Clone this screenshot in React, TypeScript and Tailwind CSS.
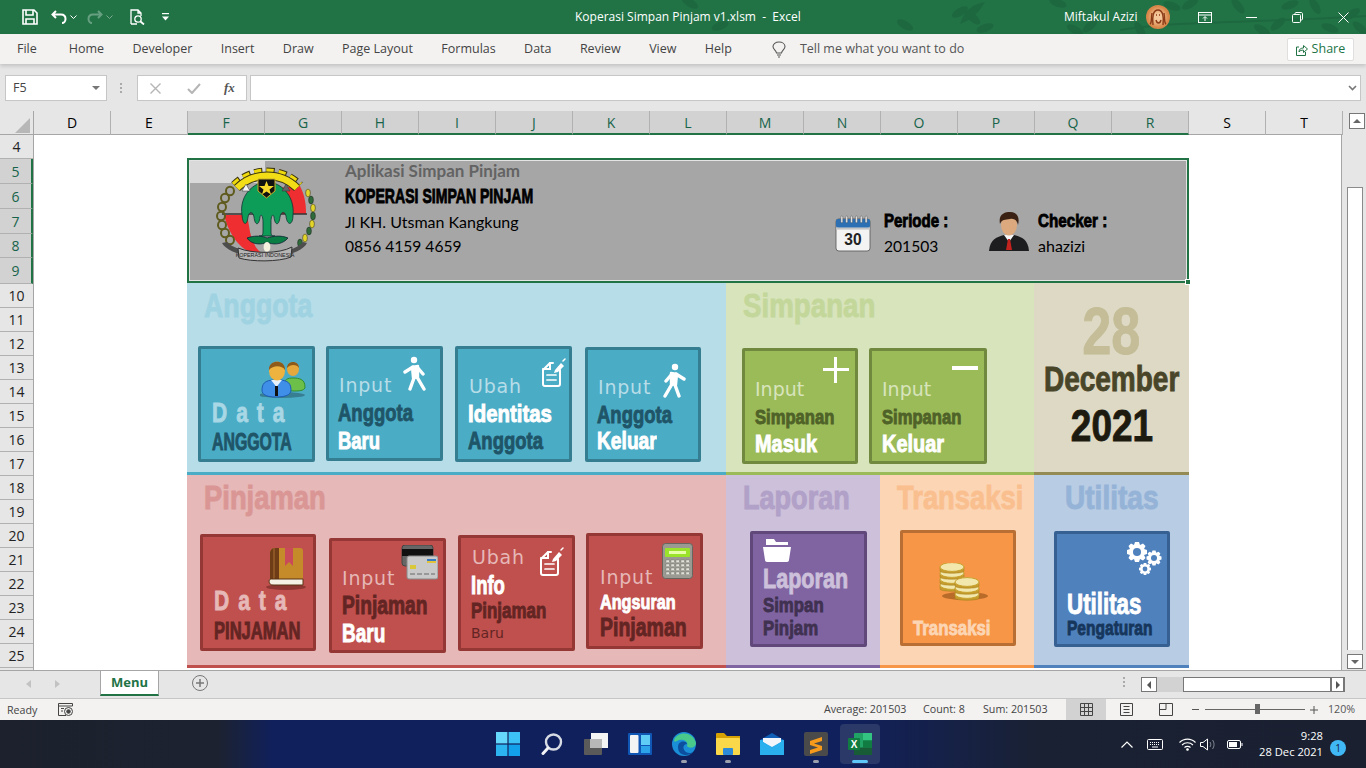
import React from 'react';
import clsx from 'clsx';

// Impact is not installed: bold Arial metrics squeezed per line to the reference widths
const impact = "[font-family:'Liberation_Sans',sans-serif] font-bold [-webkit-text-stroke:0.9px] whitespace-nowrap";
const heavy = impact + ' origin-left';
const thin = "[font-family:'DejaVu_Sans',sans-serif] whitespace-nowrap";
const calibri = "[font-family:'Lato',sans-serif] whitespace-nowrap";

const COLUMNS = ['D', 'E', 'F', 'G', 'H', 'I', 'J', 'K', 'L', 'M', 'N', 'O', 'P', 'Q', 'R', 'S', 'T'];
const SELECTED_COLS = 'FGHIJKLMNOPQR';
const ROWS: [string, number][] = [
  ['4', 24], ['5', 25], ['6', 25], ['7', 25], ['8', 24], ['9', 26], ['10', 24], ['11', 24], ['12', 24], ['13', 24], ['14', 24],
  ['15', 24], ['16', 24], ['17', 24], ['18', 24], ['19', 24], ['20', 24], ['21', 24], ['22', 24], ['23', 24], ['24', 24], ['25', 24],
];
const TABS = ['Home', 'Developer', 'Insert', 'Draw', 'Page Layout', 'Formulas', 'Data', 'Review', 'View', 'Help'];

const Logo = () => (
  <svg width="120" height="110" viewBox="0 0 120 110" className="shrink-0">
    <path d="M72 28 L95 26 C100 36 101 44 101 54 L72 54 Z" fill="#ee2e30" />
    <path d="M19 55 H42 L44 66 C46 80 50 90 60 95 C42 96 26 82 19 55 Z" fill="#ee2e30" />
    <path d="M17 54 H102" stroke="#333" strokeWidth="1.6" />
    <path d="M29 25 A47 47 0 0 1 95 25" fill="none" stroke="#3a3410" strokeWidth="8" strokeDasharray="8 4" />
    <path d="M29 25 A47 47 0 0 1 95 25" fill="none" stroke="#eed90c" strokeWidth="6" strokeDasharray="7 5" />
    <path d="M32 28 A43 43 0 0 1 92 28" fill="none" stroke="#3a3410" strokeWidth="8.5" />
    <path d="M32 28 A43 43 0 0 1 92 28" fill="none" stroke="#f2dd16" strokeWidth="6.5" />
    {[[25, 31], [20, 38], [17, 47], [16, 56], [17, 65], [20, 73], [25, 80]].map(([x, y]) => (
      <ellipse key={y} cx={x} cy={y} rx="4" ry="4.2" fill="none" stroke="#5f5b1e" strokeWidth="2" />
    ))}
    {[[103, 33], [106, 40], [108, 48], [108, 56], [107, 64], [104, 71], [100, 78], [95, 83]].map(([x, y], i) => (
      <ellipse key={y} cx={x} cy={y} rx="2.4" ry="3.9" fill={i % 2 ? '#2f6b3a' : '#e4d52a'} stroke="#222" strokeWidth="0.5" />
    ))}
    <path d="M37 55 C34 36 48 22 62 22 C76 22 90 36 88 55 C88 66 82 66 81 56 C80 51 76 51 75 57 C74 66 70 66 69 57 C68 53 66 56 66 62 L66 73 C66 76 68 76 70 76 H54 C56 76 58 76 58 72 L58 62 C58 56 56 53 55 57 C54 66 50 66 49 57 C48 51 44 51 43 57 C42 66 38 66 37 55 Z" fill="#0e9d58" stroke="#133" strokeWidth="0.8" />
    <path d="M42 78 C50 75 58 76 62 78 C68 76 76 75 83 78 C78 84 70 85 64 83 L60 83 C54 85 46 84 42 78 Z" fill="#0a7d45" stroke="#123" strokeWidth="0.8" />
    <ellipse cx="62" cy="87" rx="3.4" ry="5" fill="#f4f2df" />
    <path d="M53 19 H70 V31 L61.5 38 L53 31 Z" fill="#111" stroke="#c7ad28" strokeWidth="1" />
    <path d="M61.5 21 L63.5 26 L69 26 L64.5 29.5 L66 34.5 L61.5 31.5 L57 34.5 L58.5 29.5 L54 26 L59.5 26 Z" fill="#f6d92a" />
    <path d="M41 24 L45 31 H37 Z" fill="#f5f5f5" stroke="#333" strokeWidth="0.5" />
    <path d="M81 24 L85 31 H77 Z" fill="#666" stroke="#333" strokeWidth="0.5" />
    <path d="M17 83 C28 102 92 102 102 83 L98 82 C88 96 34 96 22 82 Z" fill="#4d4d4d" />
    <path d="M33 88 C48 94 74 94 87 87 L86 97 C74 102 46 102 34 98 Z" fill="#b5b5b5" stroke="#333" strokeWidth="1" />
    <text x="60" y="97" textAnchor="middle" fontSize="5.4" fill="#222" fontFamily="'Liberation Sans',sans-serif">KOPERASI INDONESIA</text>
  </svg>
);

const Calendar = () => (
  <svg width="37" height="37" viewBox="0 0 38 38" className="shrink-0">
    <rect x="1" y="4" width="35" height="33" rx="3" fill="#f3f3f3" stroke="#666" />
    <rect x="1" y="4" width="35" height="9" rx="2" fill="#2d6fb3" />
    <rect x="1" y="13" width="35" height="2" fill="#c4c4c4" />
    {[6, 11, 16, 21, 26, 31].map((x) => (
      <rect key={x} x={x} y="1" width="2" height="7" rx="1" fill="#e8e8e8" stroke="#444" strokeWidth="0.4" />
    ))}
    <text x="18.5" y="31" textAnchor="middle" fontSize="16" fontWeight="700" fill="#222" fontFamily="'Liberation Sans',sans-serif">30</text>
  </svg>
);

const Businessman = () => (
  <svg width="40" height="40" viewBox="0 0 40 40" className="shrink-0">
    <path d="M0 39 C1 27 8 25 15 23 H25 C32 25 39 27 40 39 Z" fill="#1d1d1f" />
    <path d="M15 23 L20 30 L25 23 Z" fill="#f5f5f5" />
    <path d="M19 27 H21 L23 38 H17 Z" fill="#c2231f" />
    <ellipse cx="20" cy="13" rx="8" ry="10.5" fill="#dca97f" />
    <path d="M11 12 C9 2 16 0 21 0 C28 0 31 5 29 13 C28 8 25 6 21 7 C16 8 13 7 11 12 Z" fill="#3a2113" />
  </svg>
);

const People = ({ className }: { className: string }) => (
  <svg width="46" height="38" viewBox="0 0 46 38" className={className}>
    <ellipse cx="22" cy="35" rx="23" ry="3" fill="#2b5f70" opacity="0.6" />
    <path d="M23 26 C24 19 28 18 33 18 C39 18 45 19 45 27 C45 30 41 31 35 31 C29 31 24 30 23 26 Z" fill="#6cc04a" stroke="#2f8c2f" />
    <ellipse cx="33" cy="9" rx="6" ry="7" fill="#e5a83c" />
    <path d="M27 8 C27 0 39 0 39 8 C37 4 30 4 27 8 Z" fill="#8a5a1c" />
    <path d="M2 30 C2 21 8 20 17 20 C25 20 31 21 31 30 C31 35 25 37 16 37 C7 37 2 35 2 30 Z" fill="#3f8fe8" stroke="#1e5db5" />
    <path d="M11 20 L16.5 27 L22 20 Z" fill="#e7f1fb" />
    <rect x="15" y="26" width="3" height="10" fill="#111" />
    <ellipse cx="17" cy="11" rx="8" ry="9.5" fill="#eeb23f" />
    <path d="M9 10 C8 -1 26 -1 25 10 C22 5 13 5 9 10 Z" fill="#8f5b1b" />
  </svg>
);

const Walk = ({ className, flip }: { className: string; flip?: boolean }) => (
  <svg width="24" height="36" viewBox="0 0 24 36" className={className} fill="none" stroke="#fff" strokeLinecap="round" strokeLinejoin="round">
    <g transform={flip ? 'matrix(-1 0 0 1 24 0)' : undefined}>
      <circle cx="11" cy="4" r="3.2" fill="#fff" stroke="none" />
      <path d="M9 11 L15 10 L15 21 L10 22 Z" fill="#fff" strokeWidth="2.4" />
      <path d="M10 11 L2 16 M14 11 L20 18 M11 22 L7 33 M14 21 L21 33" strokeWidth="3.4" />
    </g>
  </svg>
);

const DocEdit = ({ className }: { className: string }) => (
  <svg width="26" height="29" viewBox="0 0 26 29" className={className} fill="none" stroke="#fff" strokeWidth="2" strokeLinecap="round">
    <path d="M10 5 L3 12 V26 C3 27 4 28 5 28 H18 C19 28 20 27 20 26 V12" />
    <path d="M10 5 V11 H3 M10 5 H13" />
    <path d="M15 12 L21 5 L24 8 L18 14 L14 15 Z" fill="#fff" stroke="none" />
    <path d="M23 3 L25 1" strokeWidth="1.5" />
    <path d="M7 17 H16 M7 22 H16" strokeWidth="1.7" />
  </svg>
);

const Book = ({ className }: { className: string }) => (
  <svg width="40" height="44" viewBox="0 0 40 44" className={className}>
    <ellipse cx="20" cy="41" rx="20" ry="3" fill="#6a2422" opacity="0.6" />
    <path d="M9 2 H34 C36 2 37 3 37 5 V35 H4 V7 C4 4 6 2 9 2 Z" fill="#c58a2a" />
    <path d="M4 7 C4 4 6 2 9 2 H13 V36 H4 Z" fill="#6e3c16" />
    <rect x="7" y="2" width="2" height="34" fill="#8c5524" />
    <path d="M19 2 H27 V20 L23 16 L19 20 Z" fill="#c94a58" />
    <path d="M3 35 C3 33 5 33 7 33 H37 V39 H7 C5 39 3 38 3 35 Z" fill="#f5f1e4" stroke="#5a3414" />
  </svg>
);

const Cards = ({ className }: { className: string }) => (
  <svg width="37" height="35" viewBox="0 0 37 35" className={className}>
    <rect x="1" y="0" width="31" height="21" rx="3" fill="#666" stroke="#444" />
    <rect x="1" y="4" width="31" height="7" fill="#111" />
    <rect x="6" y="11" width="31" height="23" rx="2" fill="#c9c9c9" stroke="#8a8a8a" />
    <rect x="26" y="14" width="9" height="2" fill="#3a7cc4" />
    <rect x="26" y="16" width="9" height="2" fill="#e2c23a" />
    <rect x="9" y="20" width="6" height="4" fill="#d9c93a" />
    <path d="M9 29 H34" stroke="#888" strokeWidth="1.4" strokeDasharray="5 2" />
  </svg>
);

const Calculator = ({ className }: { className: string }) => (
  <svg width="31" height="36" viewBox="0 0 31 36" className={className}>
    <rect x="0.5" y="0.5" width="30" height="35" rx="3" fill="#9a9a92" stroke="#66665f" />
    <rect x="3" y="5" width="25" height="9" rx="1" fill="#9be32a" />
    <rect x="7" y="8" width="17" height="3" fill="#e6ffa8" />
    {[17, 21, 25, 29].map((y) =>
      [4, 9, 14, 19, 24].map((x) => <rect key={`${x}-${y}`} x={x} y={y} width="3.4" height="2.8" fill="#e2e2da" stroke="#555" strokeWidth="0.3" />),
    )}
  </svg>
);

const Folder = ({ className }: { className: string }) => (
  <svg width="28" height="23" viewBox="0 0 28 23" className={className} fill="#fff">
    <path d="M3 0 H11 L13 3 H25 V6 H3 Z" />
    <path d="M0 8 H28 L26 21 C26 22 25 23 24 23 H4 C3 23 2 22 2 21 Z" />
  </svg>
);

const Coin = ({ x, y, n }: { x: number; y: number; n: number }) => (
  <g>
    {Array.from({ length: n }).map((_, i) => (
      <g key={i} transform={`translate(${x} ${y + (n - 1 - i) * 6})`}>
        <path d="M0 4 V8 C0 11 24 11 24 8 V4 Z" fill="#c49b2c" stroke="#a5801e" strokeWidth="0.5" />
        <ellipse cx="12" cy="4" rx="12" ry="4.4" fill="#f2e7ad" stroke="#c8a32f" />
      </g>
    ))}
  </g>
);

const Coins = ({ className }: { className: string }) => (
  <svg width="50" height="38" viewBox="0 0 50 38" className={className}>
    <ellipse cx="27" cy="33" rx="23" ry="4" fill="#9e5a1e" opacity="0.7" />
    <Coin x={2} y={0} n={4} />
    <Coin x={17} y={15} n={3} />
  </svg>
);

const gearPath = 'M-2 -10 H2 L3 -7 L6 -8.5 L8.5 -6 L7 -3 L10 -2 V2 L7 3 L8.5 6 L6 8.5 L3 7 L2 10 H-2 L-3 7 L-6 8.5 L-8.5 6 L-7 3 L-10 2 V-2 L-7 -3 L-8.5 -6 L-6 -8.5 L-3 -7 Z';

const Gears = ({ className }: { className: string }) => (
  <svg width="36" height="36" viewBox="0 0 36 36" className={className}>
    {[[10, 11, 1], [27, 17, 0.75], [18, 28, 0.6]].map(([x, y, s]) => (
      <g key={x} transform={`translate(${x} ${y}) scale(${s})`}>
        <path d={gearPath} fill="#fff" />
        <circle r="4" fill="#4f81bd" />
      </g>
    ))}
  </svg>
);

const Tile = ({ className, children }: { className: string; children: React.ReactNode }) => (
  <div className={clsx('relative flex shrink-0 flex-col justify-end rounded-[2px] border-[3px]', className)}>{children}</div>
);

const Panel = ({ className, title, titleClass, rowClass, children }: {
  className: string; title: string; titleClass: string; rowClass: string; children?: React.ReactNode;
}) => (
  <div className={clsx('flex h-full flex-col border-b-[3px]', className)}>
    <div className="pt-[4px]">
      <div className={clsx('text-[33px] leading-[38px]', heavy, titleClass)}>{title}</div>
    </div>
    <div className={clsx('flex items-start', rowClass)}>{children}</div>
  </div>
);

const Header = () => (
  <div className="relative flex h-[125px] w-[1002px] border-2 border-[#217346] bg-[#a6a6a6] outline-1 -outline-offset-3 outline-white/70">
    <div className="absolute left-[1px] top-[1px] h-[22px] w-[75px] bg-[#d9d9d9]" />
    <div className="relative ml-[16px]"><Logo /></div>
    <div className="relative ml-[20px] w-[490px]">
      <div className={clsx(calibri, '-mt-[1px] text-[17px] font-bold leading-[24px] text-[#636363]')}>Aplikasi Simpan Pinjam</div>
      <div className={clsx(heavy, 'scale-x-[0.67] text-[21px] leading-[26px] text-black')}>KOPERASI SIMPAN PINJAM</div>
      <div className={clsx(calibri, 'text-[16px] leading-[26px] text-black')}>Jl KH. Utsman Kangkung</div>
      <div className={clsx(calibri, 'text-[15.6px] leading-[22px] text-black')}>0856 4159 4659</div>
    </div>
    <div className="flex items-end pb-[29px]"><Calendar /></div>
    <div className="ml-[12px] w-[105px] pt-[49px]">
      <div className={clsx(heavy, 'scale-x-[0.79] text-[19px] leading-[24px] text-black')}>Periode :</div>
      <div className={clsx(calibri, 'text-[15.6px] leading-[26px] text-black')}>201503</div>
    </div>
    <div className="flex items-end pb-[29px]"><Businessman /></div>
    <div className="ml-[9px] pt-[49px]">
      <div className={clsx(heavy, 'scale-x-[0.8] text-[19px] leading-[24px] text-black')}>Checker :</div>
      <div className={clsx(calibri, 'text-[16px] leading-[26px] text-black')}>ahazizi</div>
    </div>
    <div className="absolute -bottom-[4px] -right-[4px] size-[6px] border border-white bg-[#217346]" />
  </div>
);

const Dashboard = () => (
  <div className="w-[1002px]">
    <Header />
    <div className="grid h-[192px] grid-cols-[539px_308px_155px]">
      <Panel className="border-[#4bacc6] bg-[#b7dde8]" title="Anggota" titleClass="ml-[17px] scale-x-[0.81] text-[#a0d3e2]" rowClass="mt-[21px]">
        <Tile className="ml-[11px] h-[116px] w-[117px] border-[#357d91] bg-[#4bacc6] pb-[3px] pl-[11px]">
          <People className="absolute left-[59px] top-[11px]" />
          <span className={clsx(heavy, 'scale-x-[0.75] text-[28px] leading-[30px] tracking-[12px] text-[#a8d7e5]')}>Data</span>
          <span className={clsx(heavy, 'scale-x-[0.66] text-[24px] leading-[28px] text-[#1f5568]')}>ANGGOTA</span>
        </Tile>
        <Tile className="ml-[11px] h-[115px] w-[117px] border-[#357d91] bg-[#4bacc6] pb-[4px] pl-[9px]">
          <Walk className="absolute left-[74px] top-[7px]" />
          <span className={clsx(thin, 'pl-[1px] text-[19px] leading-[28px] tracking-[0.8px] text-[#b7dde8]')}>Input</span>
          <span className={clsx(heavy, 'scale-x-[0.77] text-[24px] leading-[28px] text-[#1f5568]')}>Anggota</span>
          <span className={clsx(heavy, 'scale-x-[0.77] text-[24px] leading-[27px] text-white')}>Baru</span>
        </Tile>
        <Tile className="ml-[12px] h-[116px] w-[117px] border-[#357d91] bg-[#4bacc6] pb-[5px] pl-[10px]">
          <DocEdit className="absolute left-[82px] top-[9px]" />
          <span className={clsx(thin, 'pl-[1px] text-[19px] leading-[28px] tracking-[0.8px] text-[#b7dde8]')}>Ubah</span>
          <span className={clsx(heavy, 'scale-x-[0.85] text-[24px] leading-[27px] text-white')}>Identitas</span>
          <span className={clsx(heavy, 'scale-x-[0.77] text-[24px] leading-[27px] text-[#1f5568]')}>Anggota</span>
        </Tile>
        <Tile className="ml-[13px] mt-[1px] h-[115px] w-[116px] border-[#357d91] bg-[#4bacc6] pb-[5px] pl-[9px]">
          <Walk flip className="absolute left-[74px] top-[13px]" />
          <span className={clsx(thin, 'pl-[1px] text-[19px] leading-[28px] tracking-[0.8px] text-[#b7dde8]')}>Input</span>
          <span className={clsx(heavy, 'scale-x-[0.77] text-[24px] leading-[27px] text-[#1f5568]')}>Anggota</span>
          <span className={clsx(heavy, 'scale-x-[0.8] text-[24px] leading-[26px] text-white')}>Keluar</span>
        </Tile>
      </Panel>
      <Panel className="border-[#9bbb59] bg-[#d8e4bc]" title="Simpanan" titleClass="ml-[17px] scale-x-[0.84] text-[#c4d79b]" rowClass="mt-[23px]">
        <Tile className="ml-[16px] h-[116px] w-[116px] border-[#71893f] bg-[#9bbb59] pb-[5px] pl-[10px]">
          <span className="absolute left-[78px] top-[17px] h-[3px] w-[26px] bg-white" />
          <span className="absolute left-[89px] top-[6px] h-[26px] w-[3px] bg-white" />
          <span className={clsx(thin, 'text-[19px] leading-[28px] text-[#d8e4bc]')}>Input</span>
          <span className={clsx(heavy, 'scale-x-[0.83] text-[20px] leading-[28px] text-[#4f6228]')}>Simpanan</span>
          <span className={clsx(heavy, 'scale-x-[0.83] text-[24px] leading-[25px] text-white')}>Masuk</span>
        </Tile>
        <Tile className="ml-[11px] h-[116px] w-[118px] border-[#71893f] bg-[#9bbb59] pb-[5px] pl-[10px]">
          <span className="absolute left-[80px] top-[15px] h-[4px] w-[26px] bg-white" />
          <span className={clsx(thin, 'text-[19px] leading-[28px] text-[#d8e4bc]')}>Input</span>
          <span className={clsx(heavy, 'scale-x-[0.83] text-[20px] leading-[28px] text-[#4f6228]')}>Simpanan</span>
          <span className={clsx(heavy, 'scale-x-[0.83] text-[24px] leading-[25px] text-white')}>Keluar</span>
        </Tile>
      </Panel>
      <div className="flex h-full flex-col items-center border-b-[3px] border-[#948a54] bg-[#ddd9c4] pt-[15px]">
        <div className={clsx(impact, 'scale-x-[0.78] text-[67px] leading-[66px] text-[#c4bd97]')}>28</div>
        <div className={clsx(impact, 'scale-x-[0.8] text-[35px] leading-[30px] text-[#494529]')}>December</div>
        <div className={clsx(impact, 'mt-[2px] scale-x-[0.84] text-[44px] leading-[60px] text-[#1d1b10]')}>2021</div>
      </div>
    </div>
    <div className="grid h-[193px] grid-cols-[539px_154px_154px_155px]">
      <Panel className="border-[#c0504d] bg-[#e6b8b7]" title="Pinjaman" titleClass="ml-[17px] scale-x-[0.83] text-[#da9694]" rowClass="mt-[16px]">
        <Tile className="ml-[13px] mt-[1px] h-[117px] w-[116px] border-[#953735] bg-[#c0504d] pb-[2px] pl-[11px]">
          <Book className="absolute left-[63px] top-[9px]" />
          <span className={clsx(heavy, 'scale-x-[0.75] text-[28px] leading-[30px] tracking-[12px] text-[#e6b8b7]')}>Data</span>
          <span className={clsx(heavy, 'scale-x-[0.69] text-[24px] leading-[30px] text-[#632523]')}>PINJAMAN</span>
        </Tile>
        <Tile className="ml-[13px] mt-[5px] h-[115px] w-[117px] border-[#953735] bg-[#c0504d] pb-[3px] pl-[10px]">
          <Cards className="absolute left-[69px] top-[4px]" />
          <span className={clsx(thin, 'text-[19px] leading-[28px] tracking-[0.8px] text-[#e6b8b7]')}>Input</span>
          <span className={clsx(heavy, 'scale-x-[0.77] text-[25px] leading-[27px] text-[#632523]')}>Pinjaman</span>
          <span className={clsx(heavy, 'scale-x-[0.76] text-[25px] leading-[28px] text-white')}>Baru</span>
        </Tile>
        <Tile className="ml-[12px] mt-[2px] h-[116px] w-[117px] border-[#953735] bg-[#c0504d] pb-[5px] pl-[10px]">
          <DocEdit className="absolute left-[77px] top-[9px]" />
          <span className={clsx(thin, 'pl-[1px] text-[19px] leading-[28px] tracking-[0.8px] text-[#e6b8b7]')}>Ubah</span>
          <span className={clsx(heavy, 'scale-x-[0.74] text-[25px] leading-[28px] text-white')}>Info</span>
          <span className={clsx(heavy, 'scale-x-[0.77] text-[22px] leading-[24px] text-[#632523]')}>Pinjaman</span>
          <span className={clsx(thin, 'text-[14px] leading-[20px] text-[#632523]')}>Baru</span>
        </Tile>
        <Tile className="ml-[11px] h-[116px] w-[117px] border-[#953735] bg-[#c0504d] pb-[5px] pl-[11px]">
          <Calculator className="absolute left-[73px] top-[7px]" />
          <span className={clsx(thin, 'text-[19px] leading-[28px] tracking-[0.8px] text-[#e6b8b7]')}>Input</span>
          <span className={clsx(heavy, 'scale-x-[0.81] text-[20px] leading-[22px] text-white')}>Angsuran</span>
          <span className={clsx(heavy, 'scale-x-[0.78] text-[25px] leading-[28px] text-[#632523]')}>Pinjaman</span>
        </Tile>
      </Panel>
      <Panel className="border-[#8064a2] bg-[#ccc0da]" title="Laporan" titleClass="ml-[17px] scale-x-[0.82] text-[#b1a0c7]" rowClass="mt-[14px]">
        <Tile className="ml-[24px] h-[116px] w-[117px] border-[#60497a] bg-[#8064a2] pb-[5px] pl-[10px]">
          <Folder className="absolute left-[10px] top-[5px]" />
          <span className={clsx(heavy, 'scale-x-[0.77] text-[28px] leading-[28px] text-[#ccc0da]')}>Laporan</span>
          <span className={clsx(heavy, 'scale-x-[0.8] text-[21px] leading-[24px] text-[#403151]')}>Simpan</span>
          <span className={clsx(heavy, 'scale-x-[0.8] text-[21px] leading-[22px] text-[#403151]')}>Pinjam</span>
        </Tile>
      </Panel>
      <Panel className="border-[#f79646] bg-[#fcd5b4]" title="Transaksi" titleClass="ml-[17px] scale-x-[0.83] text-[#fabf8f]" rowClass="mt-[13px]">
        <Tile className="ml-[20px] h-[116px] w-[116px] border-[#b96f34] bg-[#f79646] pb-[3px] pl-[10px]">
          <Coins className="absolute left-[35px] top-[30px]" />
          <span className={clsx(heavy, 'scale-x-[0.84] text-[20px] leading-[24px] text-[#fcd5b4]')}>Transaksi</span>
        </Tile>
      </Panel>
      <Panel className="border-[#4f81bd] bg-[#b8cce4]" title="Utilitas" titleClass="ml-[31px] scale-x-[0.85] text-[#95b3d7]" rowClass="mt-[14px]">
        <Tile className="ml-[20px] h-[116px] w-[116px] border-[#366092] bg-[#4f81bd] pb-[4px] pl-[10px]">
          <Gears className="absolute left-[70px] top-[7px]" />
          <span className={clsx(heavy, 'scale-x-[0.77] text-[29px] leading-[24px] text-white')}>Utilitas</span>
          <span className={clsx(heavy, 'scale-x-[0.74] text-[21px] leading-[24px] text-[#16365c]')}>Pengaturan</span>
        </Tile>
      </Panel>
    </div>
  </div>
);

const TitleLeaves = () => (
  <svg width="1366" height="34" viewBox="0 0 1366 34" className="absolute left-0 top-0" fill="#1e6840">
    {[[905, 25, 30], [960, 12, -30], [973, 18, 40], [985, 28, -20], [1058, 3, 20], [1075, 30, 30], [1090, 26, -40], [1140, 30, 60], [1172, 6, 20], [1190, 4, -30], [1238, 6, 50], [1262, 30, 30], [1278, 24, -40], [1290, 5, -20], [1315, 6, 60], [1330, 28, 20], [1352, 14, -30], [1360, 28, 40], [690, 3, 30], [720, 26, -20]].map(([x, y, r]) => (
      <ellipse key={x} cx={x} cy={y} rx="9" ry="4" transform={`rotate(${r} ${x} ${y})`} />
    ))}
    <path d="M1120 30 C1180 20 1240 24 1366 16" fill="none" stroke="#1e6840" strokeWidth="2" />
    <path d="M960 24 C965 8 975 4 985 2 C980 10 975 18 960 24 Z" />
  </svg>
);

const TitleBar = () => (
  <div className="relative flex h-[34px] shrink-0 items-center bg-[#217346] text-white">
    <TitleLeaves />
    <div className="relative flex w-[560px] items-center">
      <svg width="16" height="16" viewBox="0 0 16 16" className="ml-[22px]" fill="none" stroke="#fff" strokeWidth="1.6">
        <path d="M1 1 H12 L15 4 V15 H1 Z" />
        <path d="M4 1 V6 H11 V1 M4 15 V10 H12 V15" />
      </svg>
      <svg width="16" height="14" viewBox="0 0 16 14" className="ml-[13px]" fill="none" stroke="#fff" strokeWidth="2">
        <path d="M5 1 L1.5 4.5 L5 8 M2 4.5 H10 C13 4.5 14.5 6.5 14.5 9 C14.5 11 13 13 11 13" />
      </svg>
      <svg width="7" height="4" viewBox="0 0 7 4" className="ml-[3px]" fill="none" stroke="#fff"><path d="M0.5 0.5 L3.5 3.5 L6.5 0.5" /></svg>
      <svg width="16" height="14" viewBox="0 0 16 14" className="ml-[10px] opacity-40" fill="none" stroke="#cfe5d8" strokeWidth="2">
        <path d="M11 1 L14.5 4.5 L11 8 M14 4.5 H6 C3 4.5 1.5 6.5 1.5 9 C1.5 11 3 13 5 13" />
      </svg>
      <svg width="7" height="4" viewBox="0 0 7 4" className="ml-[3px] opacity-40" fill="none" stroke="#fff"><path d="M0.5 0.5 L3.5 3.5 L6.5 0.5" /></svg>
      <svg width="15" height="16" viewBox="0 0 15 16" className="ml-[17px]" fill="none" stroke="#fff" strokeWidth="1.3">
        <path d="M1 15 V1 H8 L11 4 V7 M8 1 V4 H11 M7 15 H1" />
        <circle cx="8" cy="10" r="3.2" />
        <path d="M10.5 12.5 L14 15.5" strokeWidth="1.8" />
      </svg>
      <svg width="7" height="8" viewBox="0 0 7 8" className="ml-[17px]" fill="#fff">
        <rect x="0" y="0" width="7" height="1.2" />
        <path d="M0 3.5 H7 L3.5 7.5 Z" />
      </svg>
    </div>
    <div className="relative ml-[15px] w-[489px] whitespace-pre text-[12px]">Koperasi Simpan Pinjam v1.xlsm  -  Excel</div>
    <div className="relative w-[82px] whitespace-nowrap text-[12px]">Miftakul Azizi</div>
    <div className="relative size-[24px] rounded-full bg-[radial-gradient(circle,#f4c79a_20%,#d98a4c_60%,#c96f34_100%)]">
      <svg width="24" height="24" viewBox="0 0 24 24" fill="none" stroke="#8a3a17" strokeWidth="1.4">
        <path d="M7 20 C6 12 7 5 12 5 C17 5 18 12 17 20" />
        <path d="M10 10 H11 M13 10 H14 M10 15 C11 19 14 19 15 15 M6 8 C5 14 6 18 4 19 M18 8 C19 14 18 18 20 19" />
      </svg>
    </div>
    <svg width="14" height="11" viewBox="0 0 14 11" className="relative ml-[28px]" fill="none" stroke="#fff">
      <rect x="0.5" y="0.5" width="13" height="10" />
      <path d="M0.5 3 H13.5 M7 9 V5 M5 6.5 L7 4.5 L9 6.5" />
    </svg>
    <span className="relative ml-[34px] h-px w-[11px] bg-white" />
    <svg width="11" height="11" viewBox="0 0 11 11" className="relative ml-[35px]" fill="none" stroke="#fff">
      <rect x="0.5" y="2.5" width="8" height="8" rx="1" />
      <path d="M3 2.5 V1.5 C3 1 3.5 0.5 4 0.5 H9 C10 0.5 10.5 1 10.5 2 V7 C10.5 7.5 10 8 9.5 8 H8.5" />
    </svg>
    <svg width="11" height="11" viewBox="0 0 11 11" className="relative ml-[35px]" stroke="#fff"><path d="M0.5 0.5 L10.5 10.5 M10.5 0.5 L0.5 10.5" /></svg>
  </div>
);

const Ribbon = () => (
  <div className="relative z-10 flex h-[30px] shrink-0 items-center bg-[#f3f2f1] pt-[1px] text-[12.5px] text-[#444] shadow-[0_2px_4px_rgba(0,0,0,0.16)]">
    <span className="ml-[17px] mr-[32px]">File</span>
    <div className="flex gap-[28.4px]">
      {TABS.map((t) => <span key={t} className="whitespace-nowrap">{t}</span>)}
    </div>
    <svg width="14" height="17" viewBox="0 0 14 17" className="ml-[40px]" fill="none" stroke="#555" strokeWidth="1.1">
      <path d="M4.5 12 C4 9 1 8.5 1 5.5 C1 3 3.5 1 7 1 C10.5 1 13 3 13 5.5 C13 8.5 10 9 9.5 12 Z M5 14 H9 M6 16 H8" />
    </svg>
    <span className="ml-[14px] w-[487px] whitespace-nowrap text-[#555]">Tell me what you want to do</span>
    <div className="flex h-[23px] w-[67px] items-center justify-center gap-[4px] rounded-[2px] border border-[#e1dfdd] bg-white font-medium text-[#217346]">
      <svg width="12" height="12" viewBox="0 0 12 12" fill="none" stroke="#217346">
        <path d="M3 3 H0.5 V11.5 H9.5 V8 M3 8 C3 5 5 4 7.5 4 V1.5 L11.5 5 L7.5 8.5 V6.2 C5.5 6 4 6.5 3 8 Z" />
      </svg>
      Share
    </div>
  </div>
);

const FormulaBar = () => (
  <div className="flex h-[47px] shrink-0 items-start bg-[#e6e6e6] pl-[5px] pt-[11px]">
    <div className="flex h-[26px] w-[102px] items-center justify-between border border-[#c6c6c6] bg-white pl-[7px] pr-[6px] text-[12.5px] text-[#444]">
      F5
      <span className="size-0 border-x-[4px] border-t-[4px] border-x-transparent border-t-[#777]" />
    </div>
    <div className="ml-[13px] mt-[8px] flex w-[4px] flex-col gap-[2px]">
      <span className="size-[2px] bg-[#aaa]" /><span className="size-[2px] bg-[#aaa]" /><span className="size-[2px] bg-[#aaa]" />
    </div>
    <div className="ml-[13px] flex h-[26px] w-[110px] items-center border border-[#c6c6c6] bg-white pl-[12px]">
      <svg width="11" height="11" viewBox="0 0 11 11" stroke="#b5b5b5" strokeWidth="1.4"><path d="M0.5 0.5 L10.5 10.5 M10.5 0.5 L0.5 10.5" /></svg>
      <svg width="14" height="11" viewBox="0 0 14 11" className="ml-[26px]" fill="none" stroke="#b5b5b5" strokeWidth="2"><path d="M1 6 L5 10 L13 1" /></svg>
      <span className="ml-[23px] [font-family:'Liberation_Serif',serif] text-[13px] font-bold italic text-[#555]">fx</span>
    </div>
    <div className="ml-[3px] flex h-[26px] w-[1111px] items-center justify-end border border-[#c6c6c6] bg-white pr-[3px]">
      <svg width="9" height="6" viewBox="0 0 9 6" fill="none" stroke="#777" strokeWidth="1.6"><path d="M1 1 L4.5 4.5 L8 1" /></svg>
    </div>
  </div>
);

const ColumnHeaders = () => (
  <div className="flex h-[24px] shrink-0 bg-[#e6e6e6] text-[14px]">
    <div className="flex w-[34px] items-end justify-end border-b border-r border-[#a6a6a6] pb-[1px] pr-[3px]">
      <span className="size-0 border-b-[15px] border-l-[15px] border-b-[#b7b7b7] border-l-transparent" />
    </div>
    {COLUMNS.map((c) => (
      <div
        key={c}
        className={clsx(
          'flex w-[77px] items-center justify-center border-r border-[#b1b1b1]',
          SELECTED_COLS.includes(c) ? 'border-b-2 border-b-[#217346] bg-[#d2d2d2] text-[#17644a]' : 'border-b border-b-[#a6a6a6] text-black',
        )}
      >
        {c}
      </div>
    ))}
    <div className="flex-1 pl-[6px] pt-[2px]">
      <div className="flex size-[16px] items-center justify-center border border-[#777] bg-white">
        <span className="size-0 border-x-[4px] border-b-[4px] border-x-transparent border-b-[#666]" />
      </div>
    </div>
  </div>
);

const Sheet = () => (
  <div className="flex h-[535px] shrink-0">
    <div className="w-[34px] shrink-0 overflow-hidden border-r border-[#a6a6a6] bg-[#e6e6e6] text-[14px]">
      {ROWS.map(([label, h]) => {
        const selected = ['5', '6', '7', '8', '9'].includes(label);
        return (
          <div
            key={label}
            style={{ height: h }}
            className={clsx(
              'flex items-center justify-center border-b border-[#b1b1b1]',
              selected ? 'border-r-2 border-r-[#217346] bg-[#d2d2d2] text-[#17644a]' : 'text-[#222]',
            )}
          >
            {label}
          </div>
        );
      })}
    </div>
    <div className="w-[1308px] shrink-0 overflow-hidden border-r border-[#a6a6a6] bg-white pl-[153px] pt-[23px]">
      <Dashboard />
    </div>
    <div className="flex flex-1 flex-col items-center justify-between bg-[#e6e6e6] pl-[1px]">
      <div className="mt-[52px] h-[463px] w-[16px] border border-b-0 border-[#8b8b8b] bg-white" />
      <div className="mb-[1px] flex h-[15px] w-[16px] items-center justify-center border border-[#777] bg-white">
        <span className="size-0 border-x-[4px] border-t-[4px] border-x-transparent border-t-[#666]" />
      </div>
    </div>
  </div>
);

const SheetTabs = () => (
  <div className="flex h-[28px] shrink-0 items-start border-t border-[#a6a6a6] bg-[#e6e6e6]">
    <span className="ml-[26px] mt-[9px] size-0 border-y-[4px] border-r-[5px] border-y-transparent border-r-[#c2c2c2]" />
    <span className="ml-[24px] mt-[9px] size-0 border-y-[4px] border-l-[5px] border-y-transparent border-l-[#c2c2c2]" />
    <div className="ml-[40px] flex h-[25px] w-[59px] items-center justify-center border-x border-b-2 border-x-[#a6a6a6] border-b-[#217346] bg-white text-[13px] font-bold text-[#217346]">
      Menu
    </div>
    <div className="ml-[33px] mt-[4px] flex size-[16px] items-center justify-center rounded-full border border-[#777] text-[#777]">
      <svg width="8" height="8" viewBox="0 0 8 8" stroke="#777" strokeWidth="1.5"><path d="M4 0 V8 M0 4 H8" /></svg>
    </div>
    <div className="ml-[915px] mt-[6px] flex w-[4px] flex-col gap-[2px]">
      <span className="size-[2px] bg-[#aaa]" /><span className="size-[2px] bg-[#aaa]" /><span className="size-[2px] bg-[#aaa]" />
    </div>
    <div className="ml-[14px] mt-[6px] flex h-[15px] w-[204px]">
      <div className="flex w-[16px] items-center justify-center border border-[#777] bg-white">
        <span className="size-0 border-y-[4px] border-r-[4px] border-y-transparent border-r-[#555]" />
      </div>
      <div className="w-[26px] bg-[#d2d2d2]" />
      <div className="flex-1 border-y border-l border-[#777] bg-white" />
      <div className="flex w-[15px] items-center justify-center border-2 border-y border-[#777] bg-white">
        <span className="size-0 border-y-[4px] border-l-[4px] border-y-transparent border-l-[#555]" />
      </div>
    </div>
  </div>
);

const StatusBar = () => (
  <div className="flex h-[22px] shrink-0 items-center border-t border-[#c6c6c6] bg-[#f3f2f1] text-[10.7px] text-[#444]">
    <span className="ml-[7px] mt-[1px] w-[51px]">Ready</span>
    <svg width="15" height="13" viewBox="0 0 15 13" fill="none" stroke="#444">
      <path d="M8 12.5 H0.5 V0.5 H14.5 V3 M0.5 3 H14.5 M3 5.5 H6 M3 8 H5" />
      <circle cx="10.5" cy="8.5" r="4" fill="#f3f2f1" /><circle cx="10.5" cy="8.5" r="1.8" fill="#444" />
    </svg>
    <span className="ml-[751px] w-[99px] whitespace-nowrap">Average: 201503</span>
    <span className="w-[60px] whitespace-nowrap">Count: 8</span>
    <span className="w-[83px] whitespace-nowrap">Sum: 201503</span>
    <div className="flex h-full w-[40px] items-center justify-center bg-[#d2d2d2]">
      <svg width="13" height="13" viewBox="0 0 13 13" fill="none" stroke="#444"><path d="M0.5 0.5 H12.5 V12.5 H0.5 Z M4.5 0.5 V12.5 M8.5 0.5 V12.5 M0.5 4.5 H12.5 M0.5 8.5 H12.5" /></svg>
    </div>
    <svg width="13" height="13" viewBox="0 0 13 13" className="ml-[14px]" fill="none" stroke="#444"><path d="M0.5 0.5 H12.5 V12.5 H0.5 Z M3.5 3.5 H9.5 M3.5 6.5 H9.5 M3.5 9.5 H9.5" /></svg>
    <svg width="14" height="13" viewBox="0 0 14 13" className="ml-[26px]" fill="none" stroke="#444"><path d="M0.5 0.5 H13.5 V12.5 H0.5 Z M0.5 6.5 H7 V0.5" /></svg>
    <span className="ml-[19px] h-px w-[7px] bg-[#555]" />
    <div className="relative ml-[6px] h-px w-[100px] bg-[#666]">
      <span className="absolute -top-[5px] left-[50px] h-[10px] w-[5px] bg-[#666]" />
    </div>
    <svg width="8" height="8" viewBox="0 0 8 8" className="ml-[5px]" stroke="#555"><path d="M4 0 V8 M0 4 H8" /></svg>
    <span className="ml-[10px] text-[#555]">120%</span>
  </div>
);

const TaskIcon = ({ children, dot }: { children: React.ReactNode; dot?: boolean }) => (
  <div className="relative flex h-[40px] w-[44px] items-center justify-center">
    {children}
    {dot && <span className="absolute bottom-[1px] h-[3px] w-[6px] rounded-full bg-[#9aa0ad]" />}
  </div>
);

const Taskbar = () => (
  <div className="flex h-[48px] shrink-0 items-center bg-[linear-gradient(90deg,#1c212d_0%,#1c2230_16%,#10205c_20%,#10205c_62%,#1a2133_76%,#1a2030_100%)] pl-[486px] text-white">
    <TaskIcon>
      <svg width="24" height="24" viewBox="0 0 24 24">
        <path d="M0 0 H11.4 V11.4 H0 Z" fill="#66d8fb" /><path d="M12.6 0 H24 V11.4 H12.6 Z" fill="#3cc2f5" />
        <path d="M0 12.6 H11.4 V24 H0 Z" fill="#2bb4f0" /><path d="M12.6 12.6 H24 V24 H12.6 Z" fill="#12a0ea" />
      </svg>
    </TaskIcon>
    <TaskIcon>
      <svg width="22" height="22" viewBox="0 0 22 22" fill="none">
        <circle cx="12.5" cy="9" r="7.5" stroke="#d7dbe4" strokeWidth="2.4" />
        <path d="M7 15 L2 20.5" stroke="#f2f3f6" strokeWidth="3" strokeLinecap="round" />
      </svg>
    </TaskIcon>
    <TaskIcon>
      <svg width="24" height="22" viewBox="0 0 24 22">
        <rect x="7" y="0" width="17" height="15" fill="#f4f4f4" />
        <rect x="0" y="6" width="18" height="16" rx="1" fill="#5a5a5a" />
        <rect x="6" y="6" width="12" height="9" fill="#b8b8b8" />
      </svg>
    </TaskIcon>
    <TaskIcon>
      <svg width="24" height="22" viewBox="0 0 24 22">
        <rect width="24" height="22" rx="1" fill="#1057b5" />
        <rect x="2" y="2" width="8.5" height="18" rx="1" fill="#f4f4f4" />
        <rect x="13" y="2" width="9" height="10" fill="#5fcdf5" />
        <rect x="13" y="13" width="9" height="7" fill="#2da3ea" />
      </svg>
    </TaskIcon>
    <TaskIcon dot>
      <svg width="24" height="24" viewBox="0 0 24 24">
        <circle cx="12" cy="12" r="12" fill="#1a8fd8" />
        <path d="M2 8 C5 0 20 -2 24 11 C24 16 17 17 15 14 C17 9 10 6 5 9 C3 10 2 10 2 8 Z" fill="#49c98a" />
        <path d="M6 15 C6 9 14 8 15 12 C11 12 10 17 14 20 C17 22 20 21 22 19 C18 25 6 25 6 15 Z" fill="#0c4f9e" />
      </svg>
    </TaskIcon>
    <TaskIcon dot>
      <svg width="24" height="22" viewBox="0 0 24 22">
        <path d="M0 1 C0 0 1 0 1 0 H8 L11 3 H24 V8 H0 Z" fill="#d6a105" />
        <rect y="5" width="24" height="17" rx="1" fill="#fbd84a" />
        <rect x="7" y="15" width="10" height="7" rx="1" fill="#2c8ad9" />
      </svg>
    </TaskIcon>
    <TaskIcon>
      <svg width="24" height="22" viewBox="0 0 24 22">
        <path d="M0 7 L12 0 L24 7 L12 14 Z" fill="#0f5fb8" />
        <rect y="7" width="24" height="15" fill="#28a8ea" />
        <path d="M3 5 H21 V9 L12 14 L3 9 Z" fill="#f2f6fb" />
        <path d="M0 7 L12 15 L24 7 V22 H0 Z" fill="#2ab0ee" />
      </svg>
    </TaskIcon>
    <TaskIcon dot>
      <svg width="24" height="24" viewBox="0 0 24 24">
        <rect width="24" height="24" rx="2" fill="#4a4a4a" />
        <path d="M6 9 L18 5 V9 L10 11.5 L18 14 V18 L6 22 V18 L14 15.5 L6 13 Z" fill="#f79a1c" />
      </svg>
    </TaskIcon>
    <div className="relative ml-[2px] flex h-[40px] w-[40px] items-center justify-center rounded-[4px] bg-[#2a3968]">
      <svg width="24" height="22" viewBox="0 0 24 22">
        <rect x="6" width="18" height="22" rx="1" fill="#21a366" />
        <rect x="15" width="9" height="7" fill="#33c481" />
        <rect x="15" y="7.5" width="9" height="7" fill="#107c41" />
        <rect x="6" y="14.5" width="18" height="7.5" fill="#185c37" />
        <rect y="5" width="12" height="12" rx="1" fill="#107c41" />
        <text x="6" y="15" textAnchor="middle" fontSize="10" fontWeight="700" fill="#fff" fontFamily="'Liberation Sans',sans-serif">X</text>
      </svg>
      <span className="absolute bottom-[1px] h-[3px] w-[16px] rounded-full bg-[#5fc8f8]" />
    </div>
    <svg width="12" height="7" viewBox="0 0 12 7" className="ml-[241px]" fill="none" stroke="#fff" strokeWidth="1.2"><path d="M0.5 6.5 L6 1 L11.5 6.5" /></svg>
    <svg width="16" height="11" viewBox="0 0 16 11" className="ml-[14px]" fill="none" stroke="#fff">
      <rect x="0.5" y="0.5" width="15" height="10" rx="1" /><path d="M3 3.5 H13 M3 5.5 H13" strokeDasharray="1 1" /><path d="M5 8 H11" />
    </svg>
    <svg width="17" height="13" viewBox="0 0 17 13" className="ml-[16px]" fill="none" stroke="#fff" strokeWidth="1.1">
      <path d="M0.5 4.5 C5 0 12 0 16.5 4.5 M3 7 C6 4 11 4 14 7 M5.5 9.5 C7 8 10 8 11.5 9.5" /><circle cx="8.5" cy="11.5" r="0.8" fill="#fff" />
    </svg>
    <svg width="16" height="13" viewBox="0 0 16 13" className="ml-[4px]" fill="none" stroke="#fff">
      <path d="M0.5 4.5 H3 L7.5 1 V12 L3 8.5 H0.5 Z" /><path d="M10 4 C11 5.5 11 7.5 10 9 M12.5 2 C14.5 4.5 14.5 8.5 12.5 11" strokeOpacity="0.45" />
    </svg>
    <svg width="16" height="9" viewBox="0 0 16 9" className="ml-[11px]" fill="none" stroke="#fff">
      <rect x="0.5" y="0.5" width="13" height="8" rx="1.5" /><rect x="2" y="2" width="8" height="5" fill="#fff" stroke="none" /><path d="M15 3 V6" />
    </svg>
    <div className="ml-[8px] w-[72px] whitespace-nowrap text-right text-[11.2px] leading-[16px]">
      <div>9:28</div>
      <div>28 Dec 2021</div>
    </div>
    <span className="ml-[7px] mt-[8px] flex size-[16px] items-center justify-center rounded-full bg-[#41b8f6] text-[10px] text-[#10233f]">1</span>
  </div>
);

export default function App() {
  return (
    <div className="flex h-[768px] w-[1366px] flex-col overflow-hidden [font-family:'Open_Sans',sans-serif]">
      <TitleBar />
      <Ribbon />
      <FormulaBar />
      <ColumnHeaders />
      <Sheet />
      <SheetTabs />
      <StatusBar />
      <Taskbar />
    </div>
  );
}
